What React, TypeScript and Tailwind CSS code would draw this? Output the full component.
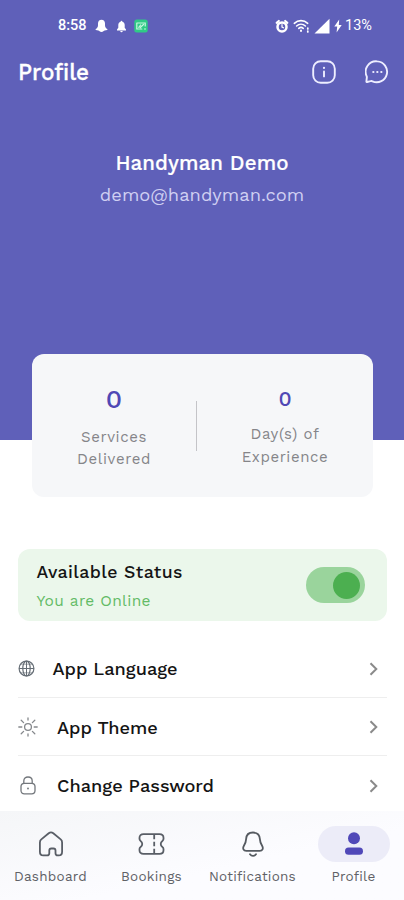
import type { ReactNode } from "react";

type IconProps = {
  className?: string;
};

function SnapBellIcon() {
  return (
    <svg width="13" height="14" viewBox="0 0 13 14" fill="#fff">
      <path d="M6.500.8C8.700.8 10 2.300 10 4.500v1.700c0 1.800.9 3 2.300 3.900.3.300.2.800-.2.900l-2.400.5c-.8.100-1.600 1.500-3.200 1.500s-2.400-1.400-3.200-1.500L.9 11c-.4-.1-.5-.6-.2-.9C2.100 9.200 3 8 3 6.200V4.500C3 2.300 4.300.8 6.500.8Z" />
    </svg>
  );
}

function SmallBellIcon() {
  return (
    <svg width="11" height="13" viewBox="0 0 11 13" fill="#fff">
      <path d="M5.500.8c.6 0 .9.400.9.900 1.600.4 2.300 1.600 2.300 3.400v2.600L10 9.500v.9H1v-.9l1.300-1.800V5.100c0-1.800.7-3 2.300-3.400 0-.5.300-.9.900-.9ZM4.300 11.100h2.400a1.200 1.200 0 0 1-2.400 0Z" />
    </svg>
  );
}

function GreenAppIcon() {
  return (
    <svg width="14" height="14" viewBox="0 0 14 14" fill="none">
      <rect x=".3" y=".5" width="13.400" height="13" rx="2.500" fill="#2fcb86" />
      <path d="M2.800 4h8.400v3M2.800 4v6h5M4.800 8.300l1.800-2.300M6.300 8.500 9.500 5.500M11 9.500v.8" stroke="#c8f8df" strokeWidth="1.200" strokeLinecap="round" />
    </svg>
  );
}

function AlarmIcon() {
  return (
    <svg width="14" height="15" viewBox="0 0 14 15" fill="none">
      <path d="M1.700 3.800 3.800 2M12.300 3.800 10.200 2" stroke="#fff" strokeWidth="2.200" strokeLinecap="round" />
      <circle cx="7" cy="7.900" r="4.500" stroke="#fff" strokeWidth="2.500" />
      <path d="M7 5.700v2.400l1.500.7" stroke="#fff" strokeWidth="1.200" strokeLinecap="round" />
    </svg>
  );
}

function WifiIcon() {
  return (
    <svg width="18" height="15" viewBox="0 0 18 15" fill="none" stroke="#fff" strokeLinecap="round">
      <path d="M1.300 4.300c3.900-3.600 9.500-3.600 13.400 0M3.600 7c2.600-2.400 6.200-2.400 8.800 0M5.800 9.400c1.300-1.200 3.100-1.200 4.400 0" strokeWidth="1.600" />
      <path d="M8 11.500v.6" strokeWidth="2" />
      <path d="M14.800 9v1M14.800 12v1" strokeWidth="1.700" />
    </svg>
  );
}

function SignalIcon() {
  return (
    <svg width="16" height="16" viewBox="0 0 16 16" fill="#fff">
      <path d="M15.500.8v14.700H.5Z" />
    </svg>
  );
}

function BoltIcon() {
  return (
    <svg width="8" height="14" viewBox="0 0 8 14" fill="#fff">
      <path d="M5.200.5.300 7.600h2.900L2.600 13.500 7.700 6H4.800Z" />
    </svg>
  );
}

function InfoIcon() {
  return (
    <svg width="24" height="24" viewBox="0 0 24 24" fill="none" stroke="#eeeeff" strokeLinecap="round">
      <rect x="1.200" y="1.200" width="21.600" height="21.600" rx="7.500" strokeWidth="1.900" />
      <path d="M12 11.400v5" strokeWidth="1.900" />
      <path d="M12 7.700v.2" strokeWidth="2.100" />
    </svg>
  );
}

function ChatIcon() {
  return (
    <svg width="24" height="24" viewBox="0 0 24 24" fill="none" stroke="#eeeeff" strokeLinecap="round" strokeLinejoin="round">
      <path d="M12.300 1.400A10.400 10.400 0 1 1 7.500 21.300c-.7-.3-1.300-.3-2-.1l-3.300.8c-.5.100-.8-.1-.8-.6l.4-3.500c.1-.6.100-1-.1-1.600A10.400 10.400 0 0 1 12.300 1.400Z" strokeWidth="1.900" />
      <path d="M8.300 12h.1M12.300 12h.1M16.300 12h.1" strokeWidth="2.200" />
    </svg>
  );
}

function GlobeIcon() {
  return (
    <svg width="17" height="17" viewBox="0 0 17 17" fill="none" stroke="#666e76" strokeWidth="1.200">
      <circle cx="8.500" cy="8.500" r="7.400" />
      <path d="M1 8.500h15M8.500 1v15" strokeWidth="1" />
      <path d="M3 4.200h11M3 12.800h11" strokeWidth=".6" />
      <ellipse cx="8.500" cy="8.500" rx="3.700" ry="7.400" />
    </svg>
  );
}

function SunIcon() {
  return (
    <svg width="20" height="20" viewBox="0 0 20 20" fill="none" stroke="#85888c" strokeWidth="1.300" strokeLinecap="round">
      <circle cx="10" cy="10" r="3.400" />
      <path d="M10 1v2M10 17v2M.8 10h3M16.200 10h3M3.200 3.200l2.400 2.400M14.400 14.400l2.400 2.400M3.200 16.800l2.400-2.400M14.400 5.600l2.400-2.400" />
    </svg>
  );
}

function LockIcon() {
  return (
    <svg width="16" height="19" viewBox="0 0 16 19" fill="none" stroke="#73777c" strokeWidth="1.300" strokeLinecap="round">
      <path d="M3.800 7.300V4.900C3.800 2.600 5.500 1 8 1s4.200 1.600 4.200 3.900v2.400" />
      <rect x="1" y="7.300" width="14" height="10.600" rx="3.300" />
      <path d="M8 12.300v.3" strokeWidth="1.800" />
    </svg>
  );
}

function ChevronIcon({ className }: IconProps) {
  return (
    <svg width="10" height="14" viewBox="0 0 10 14" fill="none" className={className}>
      <path d="m1.500 1.200 5.800 5.800-5.800 5.800" stroke="#8a8a8a" strokeWidth="2" />
    </svg>
  );
}

function HomeIcon() {
  return (
    <svg width="26" height="26" viewBox="0 0 26 26" fill="none" stroke="#595e66" strokeWidth="1.800" strokeLinejoin="round">
      <path d="M1.900 11.400c0-1.300.4-2.200 1.400-3l7.400-6.100c1.500-1.200 3.100-1.200 4.600 0l7.400 6.100c1 .8 1.400 1.700 1.400 3v9.300c0 2.400-1.300 3.700-3.300 3.700h-1c-1.500 0-2.300-.8-2.300-2.200v-2.700c0-1.300-.8-2-2-2h-2.200c-1.200 0-2 .7-2 2v2.700c0 1.400-.8 2.200-2.300 2.200H5.200c-2 0-3.300-1.300-3.300-3.700Z" />
    </svg>
  );
}

function TicketIcon() {
  return (
    <svg width="27" height="22" viewBox="0 0 27 22" fill="none" stroke="#595e66" strokeWidth="1.800" strokeLinejoin="round">
      <path d="M5.500 1.200h16c2.600 0 4 1.300 4 3.600v1.300c0 .9-.4 1.300-1.100 1.800-2.200 1.500-2.200 4.700 0 6.200.7.500 1.100.9 1.100 1.800v1.300c0 2.300-1.400 3.600-4 3.600h-16c-2.600 0-4-1.300-4-3.600v-1.300c0-.9.400-1.300 1.100-1.800 2.200-1.500 2.200-4.700 0-6.200-.7-.5-1.100-.9-1.100-1.800V4.800c0-2.300 1.400-3.600 4-3.600Z" />
      <path d="M16.200 1.200v5M16.200 8.700v4.600M16.200 15.800v5" />
    </svg>
  );
}

function BellIcon() {
  return (
    <svg width="24" height="27" viewBox="0 0 24 27" fill="none" stroke="#555a60" strokeWidth="1.800" strokeLinecap="round" strokeLinejoin="round">
      <path d="M12 1.500c4.200 0 6.700 2.700 6.900 6.600.1 2.900.7 4.200 2.200 6.700 1.600 2.700.4 5-2.400 5H5.300c-2.800 0-4-2.300-2.400-5 1.500-2.500 2.100-3.800 2.200-6.700.2-3.900 2.700-6.600 6.900-6.600Z" />
      <path d="M9 23.200c1.600 2.300 4.400 2.300 6 0" />
    </svg>
  );
}

function PersonIcon() {
  return (
    <svg width="20" height="24" viewBox="0 0 20 24" fill="#5048b8">
      <circle cx="10" cy="6.200" r="6" />
      <rect x="1" y="15.600" width="18" height="7.200" rx="3.600" />
    </svg>
  );
}

const settings = [
  { label: "App Language", icon: <GlobeIcon />, iconBox: "w-[34.500px]" },
  { label: "App Theme", icon: <SunIcon />, iconBox: "w-[39px]" },
  { label: "Change Password", icon: <LockIcon />, iconBox: "w-[39px] pl-[2px]" },
];

type NavItemProps = {
  label: string;
  icon: ReactNode;
  active?: boolean;
};

function NavItem({ label, icon, active }: NavItemProps) {
  return (
    <a className="flex flex-1 flex-col items-center pt-[15px]">
      <span
        className={
          active
            ? "flex h-9 w-[72px] items-center justify-center rounded-full bg-[#ececf8]"
            : "flex h-9 w-[72px] items-center justify-center"
        }
      >
        {icon}
      </span>
      <span className="mt-[4px] whitespace-nowrap text-[13.500px] leading-[20px] tracking-[0.25px] text-[#606166]">
        {label}
      </span>
    </a>
  );
}

export default function App() {
  return (
    <div className="flex h-[900px] w-[404px] flex-col overflow-hidden bg-white font-['Work_Sans','Inter',sans-serif]">
      <header className="h-[440px] shrink-0 bg-[#5f60b9] text-white">
        <div className="flex h-[52px] items-center justify-between pr-[31px] pl-[58px] font-['Roboto',sans-serif] text-[14.500px] font-medium">
          <div className="flex items-center">
            <span className="w-[37px]">8:58</span>
            <SnapBellIcon />
            <span className="ml-[8px]">
              <SmallBellIcon />
            </span>
            <span className="ml-[7px]">
              <GreenAppIcon />
            </span>
          </div>
          <div className="flex items-center">
            <AlarmIcon />
            <span className="ml-[4px]">
              <WifiIcon />
            </span>
            <span className="ml-[3px]">
              <SignalIcon />
            </span>
            <span className="ml-[4px]">
              <BoltIcon />
            </span>
            <span className="ml-[3px] w-[28px] font-normal">13%</span>
          </div>
        </div>

        <div className="flex h-[40px] items-center justify-between pr-[15px] pl-[18px]">
          <h1 className="pt-[2px] text-[22.500px] font-medium tracking-[-0.1px] [-webkit-text-stroke:0.3px_#fff]">Profile</h1>
          <div className="flex items-center gap-[29px]">
            <InfoIcon />
            <ChatIcon />
          </div>
        </div>

        <div className="flex flex-col items-center pt-[57px]">
          <p className="text-[20.500px] leading-[28px] font-medium tracking-[0.1px] [-webkit-text-stroke:0.2px_#fff]">
            Handyman Demo
          </p>
          <p className="mt-[5px] text-[18.300px] leading-[26px] tracking-[0.02px] text-[#cfcff2]">demo@handyman.com</p>
        </div>
      </header>

      <section className="mx-[32px] -mt-[86px] flex h-[143px] w-[341px] shrink-0 rounded-[12px] bg-[#f6f7f9]">
        <div className="flex w-[164px] shrink-0 flex-col items-center pt-[32px]">
          <span className="text-[26px] leading-[26px] font-medium text-[#5048b5]">0</span>
          <p className="mt-[13.500px] text-center text-[15px] leading-[22.500px] tracking-[0.6px] text-[#858589]">
            Services
            <br />
            Delivered
          </p>
        </div>
        <div className="mt-[47px] h-[50px] w-px bg-[#c4c4c8]" />
        <div className="flex grow flex-col items-center pt-[32px]">
          <span className="text-[21px] leading-[26px] font-medium text-[#5048b5]">0</span>
          <p className="mt-[11px] text-center text-[15px] leading-[22.500px] tracking-[0.6px] text-[#858589]">
            Day(s) of
            <br />
            Experience
          </p>
        </div>
      </section>

      <section className="mt-[52px] ml-[18px] flex h-[72px] w-[369px] shrink-0 items-center justify-between rounded-[12px] bg-[#ebf7eb] pr-[22px] pl-[18.500px]">
        <div className="pt-[2px]">
          <p className="text-[17.700px] leading-[26px] font-medium tracking-[0.4px] text-[#141414]">Available Status</p>
          <p className="mt-[4px] text-[15.500px] leading-[24px] tracking-[0.35px] text-[#63bb66]">You are Online</p>
        </div>
        <button className="flex h-[36px] w-[59px] items-center justify-end rounded-full bg-[#9ad49c] pr-[5px]">
          <span className="size-[27px] rounded-full bg-[#4caf50]" />
        </button>
      </section>

      <ul className="mt-[18px] ml-[18px] h-[172px] w-[369px] shrink-0 overflow-hidden">
        {settings.map((item) => (
          <li key={item.label} className="flex h-[58.500px] items-center border-b border-[#eeeeee] pt-[2px]">
            <span className={item.iconBox}>{item.icon}</span>
            <span className="text-[18.200px] font-medium text-[#141414]">{item.label}</span>
            <ChevronIcon className="mr-[8px] ml-auto" />
          </li>
        ))}
      </ul>

      <nav className="flex h-[89px] shrink-0 bg-[#fcfcff] bg-linear-to-br from-[#f5f6f8] to-[#fcfcff] to-60%">
        <NavItem label="Dashboard" icon={<HomeIcon />} />
        <NavItem label="Bookings" icon={<TicketIcon />} />
        <NavItem label="Notifications" icon={<BellIcon />} />
        <NavItem label="Profile" icon={<PersonIcon />} active />
      </nav>
    </div>
  );
}
